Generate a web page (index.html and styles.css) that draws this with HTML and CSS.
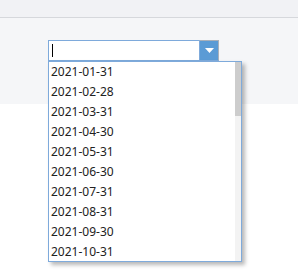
FILE: index.html
```html
<!DOCTYPE html>
<html lang="en">
<head>
    <meta charset="UTF-8">
    <title>Date picker</title>
    <link rel="stylesheet" href="styles.css">
</head>
<body>
    <div class="topbar"></div>

    <div class="panel">
        <div class="combo">
            <div class="combo-input"><span class="caret"></span></div>
            <div class="combo-btn">
                <svg width="9" height="5" viewBox="0 0 9 5"><path d="M0 0H9L4.5 5Z" fill="#fff"/></svg>
            </div>

            <div class="dropdown">
                <ul class="options">
                    <li>2021-01-31</li>
                    <li>2021-02-28</li>
                    <li>2021-03-31</li>
                    <li>2021-04-30</li>
                    <li>2021-05-31</li>
                    <li>2021-06-30</li>
                    <li>2021-07-31</li>
                    <li>2021-08-31</li>
                    <li>2021-09-30</li>
                    <li>2021-10-31</li>
                </ul>
                <div class="scrollbar"><div class="thumb"></div></div>
            </div>
        </div>
    </div>

    <div class="content"></div>
</body>
</html>
```

FILE: styles.css
```css
body {
    margin: 0;
    background-color: #fff;
    font-family: "Noto Sans", "Open Sans", sans-serif;
    font-size: 12px;
    color: #222;
}

.topbar {
    height: 17px;
    background-color: #f1f2f5;
    border-bottom: 1px solid #d6d8dc;
}

.panel {
    position: relative;
    z-index: 2;
    height: 64px;
    padding: 22px 0 0 48px;
    background-color: #f5f6f8;
}

.content {
    height: 170px;
    background-color: #fff;
}

.combo {
    position: relative;
    display: flex;
    width: 171px;
    height: 21px;
}

.combo-input {
    flex: 1;
    display: flex;
    align-items: center;
    background-color: #fff;
    border: 1px solid #7eaadb;
    border-right: none;
    padding-left: 3px;
}

.caret {
    width: 1px;
    height: 13px;
    background-color: #000;
}

.combo-btn {
    width: 18px;
    display: flex;
    align-items: center;
    justify-content: center;
    background-color: #5b9bd5;
    border: 1px solid #a8b0ba;
    border-left-color: #7eaadb;
    border-bottom-color: #7eaadb;
}

.dropdown {
    position: absolute;
    z-index: 10;
    top: 21px;
    left: 0;
    width: 192px;
    height: 199px;
    display: flex;
    background-color: #fff;
    border: 1px solid #7eaadb;
    box-shadow: 3px 3px 4px rgba(0, 0, 0, 0.28);
}

.options {
    flex: 1;
    margin: 0;
    padding: 0;
    list-style: none;
    overflow: hidden;
}

.options li {
    height: 20px;
    line-height: 20px;
    padding-left: 2px;
}

.scrollbar {
    width: 6px;
    background-color: #f3f3f3;
}

.thumb {
    height: 54px;
    background-color: #cdcdcd;
}
```
